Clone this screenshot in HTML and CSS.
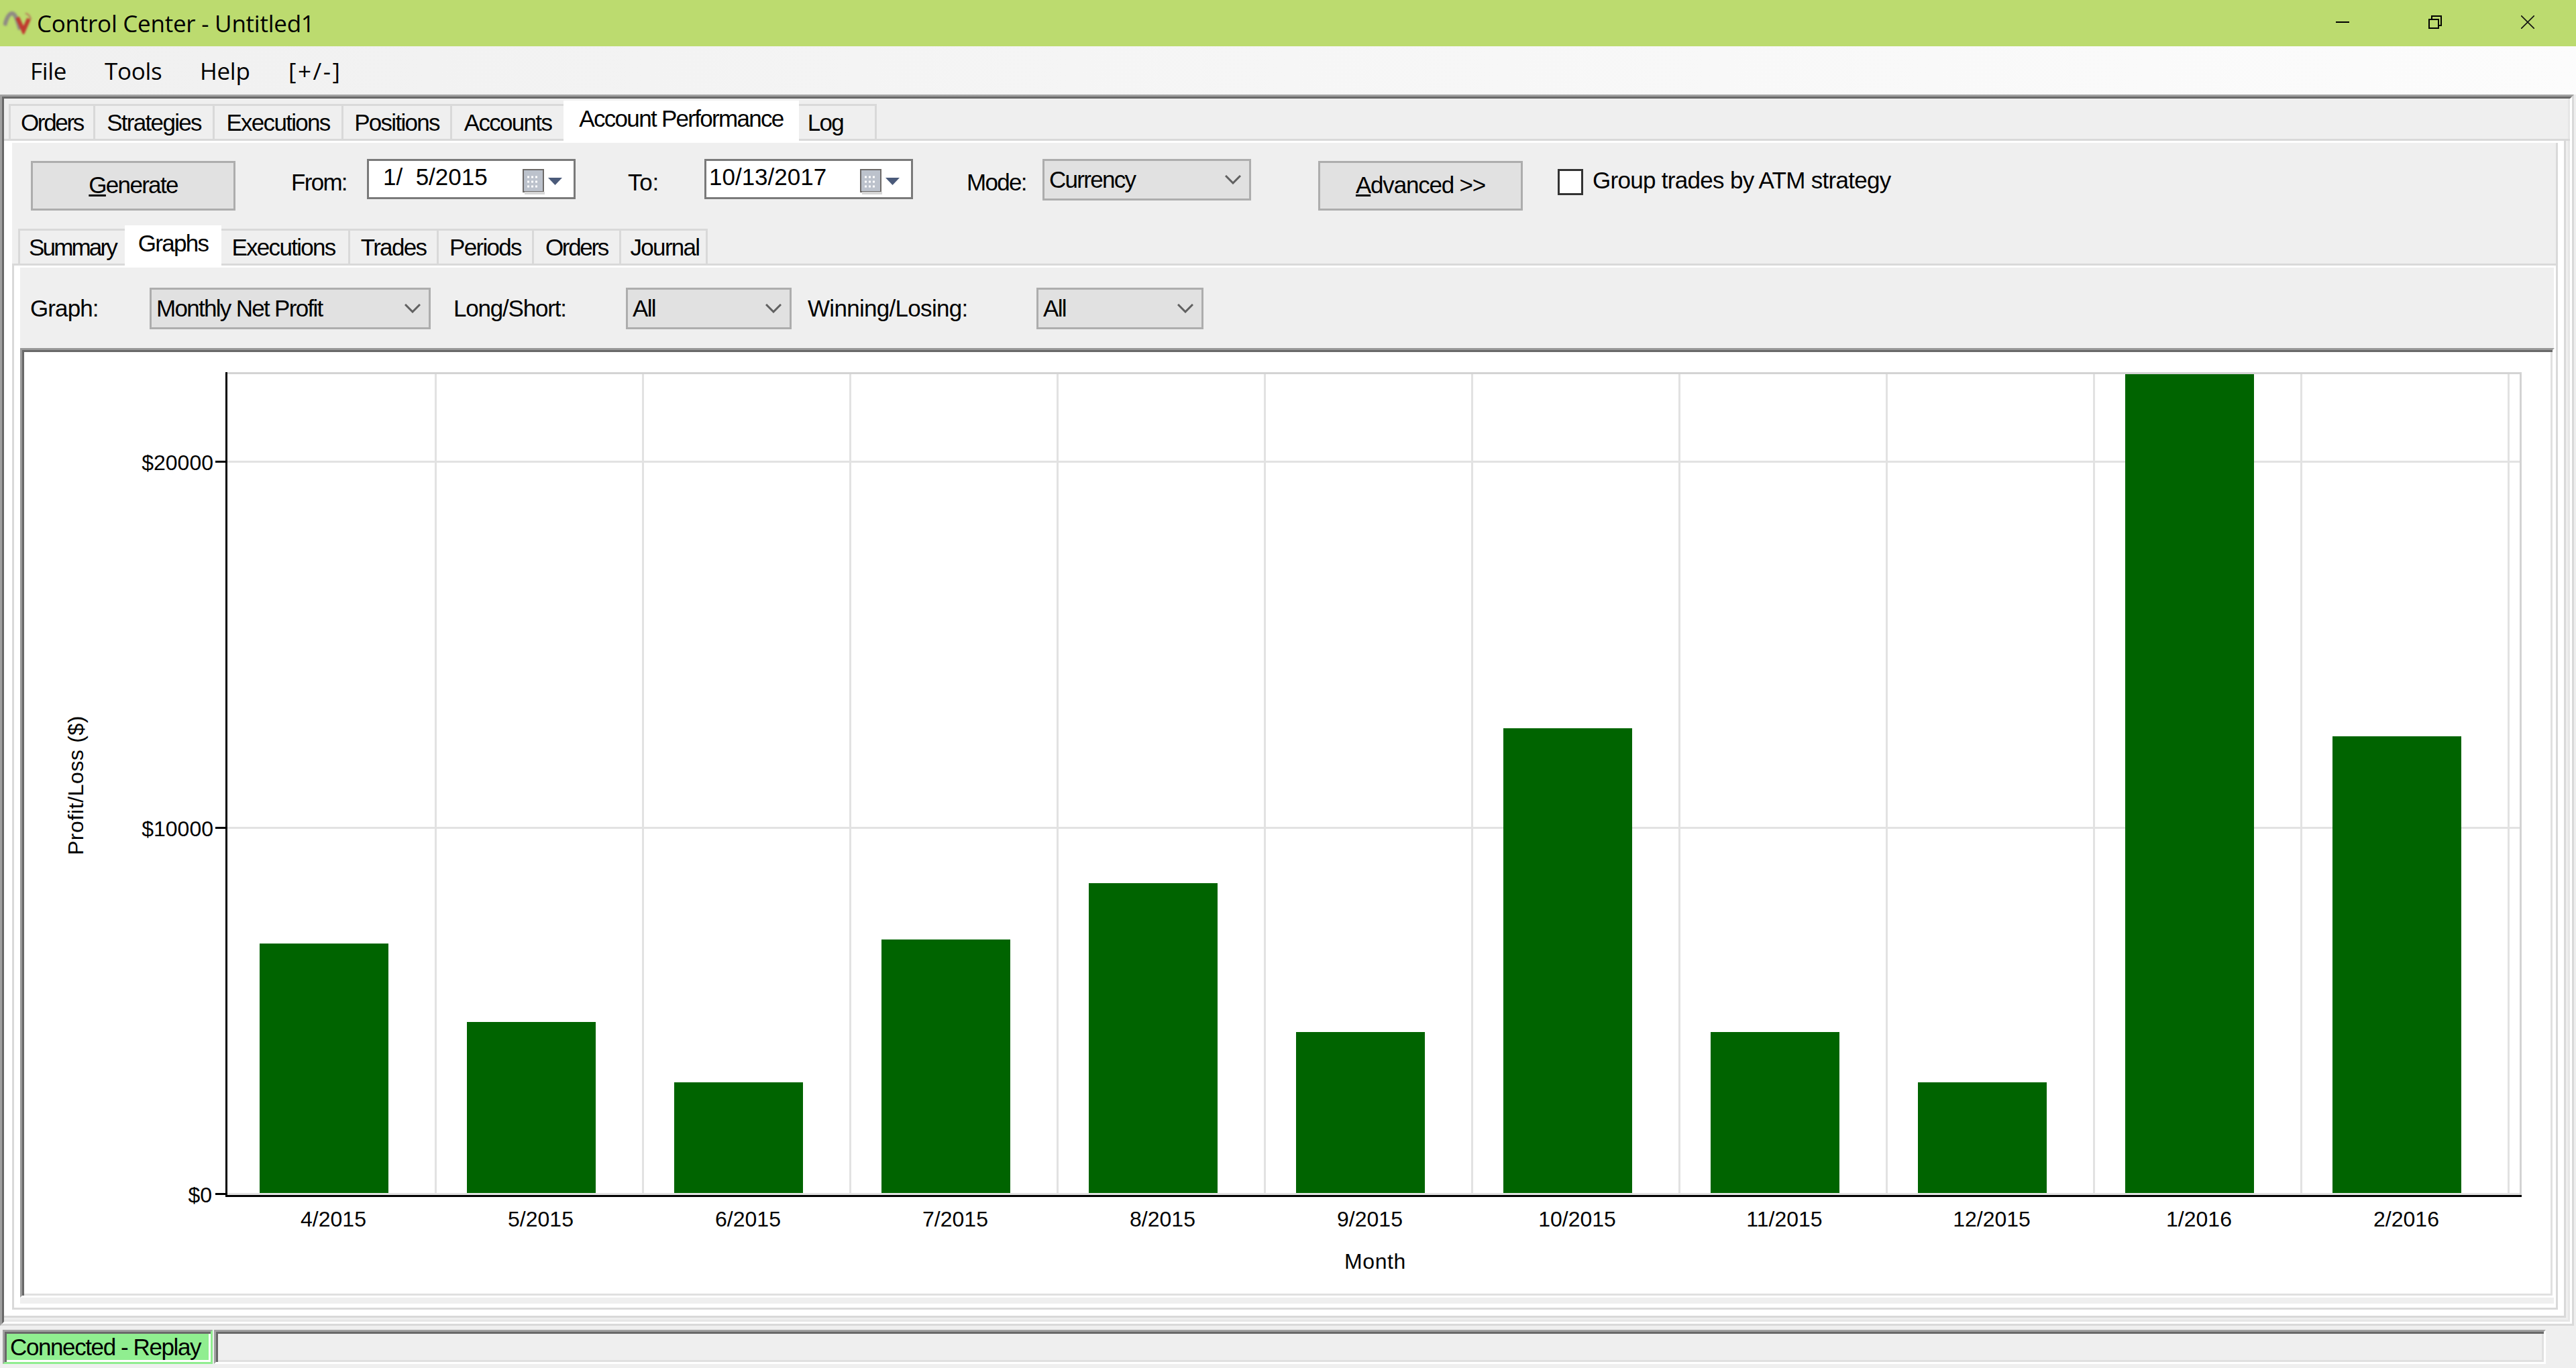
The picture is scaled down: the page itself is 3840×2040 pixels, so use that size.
FILE: index.html
```html
<!DOCTYPE html>
<html lang="en">
<head>
    <meta charset="UTF-8">
    <title>Control Center - Untitled1</title>
    <link rel="stylesheet" href="styles.css">
</head>
<body>
    <header class="title-bar">
        <svg class="app-logo" width="44" height="34" viewBox="0 0 44 34">
            <path d="M2 21C5 9 9 3 13 3C18 3 21 14 25 27" fill="none" stroke="#8f8a84" stroke-width="6"/>
            <path d="M21 9L30 29L38 11" fill="none" stroke="#c0392f" stroke-width="6"/>
            <path d="M33 3C37 4 40 7 41 12" fill="none" stroke="#b8705a" stroke-width="2"/>
        </svg>
        <span class="app-title">Control Center - Untitled1</span>
        <div class="window-buttons">
            <div class="window-button">
                <svg width="20" height="20" viewBox="0 0 20 20"><rect y="9" width="20" height="2" fill="#000"/></svg>
            </div>
            <div class="window-button">
                <svg width="20" height="20" viewBox="0 0 20 20">
                    <path d="M1 6H15V19H1Z M5 6V1H19V15H15" fill="none" stroke="#000" stroke-width="2"/>
                </svg>
            </div>
            <div class="window-button">
                <svg width="20" height="20" viewBox="0 0 20 20">
                    <path d="M0 0L20 20M20 0L0 20" fill="none" stroke="#111" stroke-width="1.6"/>
                </svg>
            </div>
        </div>
    </header>

    <nav class="menu-bar">
        <span class="menu-item menu-file">File</span>
        <span class="menu-item menu-tools">Tools</span>
        <span class="menu-item menu-help">Help</span>
        <span class="menu-item menu-toggle">[+/-]</span>
    </nav>

    <main class="main-frame">
        <div class="main-inner">
            <div class="tab-strip main-tabs">
                <div class="tab tab-orders">Orders</div>
                <div class="tab tab-strategies">Strategies</div>
                <div class="tab tab-executions">Executions</div>
                <div class="tab tab-positions">Positions</div>
                <div class="tab tab-accounts">Accounts</div>
                <div class="tab tab-active tab-performance">Account Performance</div>
                <div class="tab tab-last tab-log">Log</div>
            </div>

            <div class="tab-page">
                <div class="page-body">
                    <div class="toolbar">
                        <button class="push-button"><u>G</u>enerate</button>
                        <label class="field-label label-from">From:</label>
                        <div class="date-picker">
                            <span class="date-from">1/ &nbsp;5/2015</span>
                            <svg class="calendar-icon" width="59" height="38" viewBox="0 0 59 38">
                                <rect x="1" y="1" width="30" height="33" fill="#bcc2cc" stroke="#6d6a68" stroke-width="2"/>
                                <rect y="34" x="3" width="30" height="4" fill="#d6d6d6"/>
                                <path d="M7 12H25M7 19H25M7 26H25" stroke="#fff" stroke-width="3" stroke-dasharray="3 3"/>
                                <path d="M38 13H59L48.500 24Z" fill="#4a5a7a"/>
                            </svg>
                        </div>
                        <label class="field-label label-to">To:</label>
                        <div class="date-picker">
                            <span class="date-to">10/13/2017</span>
                            <svg class="calendar-icon" width="59" height="38" viewBox="0 0 59 38">
                                <rect x="1" y="1" width="30" height="33" fill="#bcc2cc" stroke="#6d6a68" stroke-width="2"/>
                                <rect y="34" x="3" width="30" height="4" fill="#d6d6d6"/>
                                <path d="M7 12H25M7 19H25M7 26H25" stroke="#fff" stroke-width="3" stroke-dasharray="3 3"/>
                                <path d="M38 13H59L48.500 24Z" fill="#4a5a7a"/>
                            </svg>
                        </div>
                        <label class="field-label label-mode">Mode:</label>
                        <div class="combo combo-mode">
                            <span>Currency</span>
                            <svg width="24" height="14" viewBox="0 0 24 14"><path d="M1 1L12 12L23 1" fill="none" stroke="#606060" stroke-width="3"/></svg>
                        </div>
                        <button class="push-button button-advanced"><u>A</u>dvanced &gt;&gt;</button>
                        <span class="check-box"></span>
                        <label class="check-label">Group trades by ATM strategy</label>
                    </div>

                    <div class="tab-strip inner-tabs">
                        <div class="tab tab-summary">Summary</div>
                        <div class="tab tab-active tab-graphs">Graphs</div>
                        <div class="tab tab-executions-2">Executions</div>
                        <div class="tab tab-trades">Trades</div>
                        <div class="tab tab-periods">Periods</div>
                        <div class="tab tab-orders-2">Orders</div>
                        <div class="tab tab-last tab-journal">Journal</div>
                    </div>

                    <div class="inner-page">
                        <div class="graph-panel">
                            <div class="selector-row">
                                <label class="field-label label-graph">Graph:</label>
                                <div class="combo combo-graph">
                                    <span>Monthly Net Profit</span>
                                    <svg width="24" height="14" viewBox="0 0 24 14"><path d="M1 1L12 12L23 1" fill="none" stroke="#606060" stroke-width="3"/></svg>
                                </div>
                                <label class="field-label label-long">Long/Short:</label>
                                <div class="combo combo-long">
                                    <span>All</span>
                                    <svg width="24" height="14" viewBox="0 0 24 14"><path d="M1 1L12 12L23 1" fill="none" stroke="#606060" stroke-width="3"/></svg>
                                </div>
                                <label class="field-label label-winning">Winning/Losing:</label>
                                <div class="combo combo-winning">
                                    <span>All</span>
                                    <svg width="24" height="14" viewBox="0 0 24 14"><path d="M1 1L12 12L23 1" fill="none" stroke="#606060" stroke-width="3"/></svg>
                                </div>
                            </div>

                            <div class="chart-frame">
                                <!-- viewBox uses window coordinates, so the numbers read like the plot -->
                                <svg class="chart" width="3766" height="1404" viewBox="36 525 3766 1404">
                                    <g class="grid-lines">
                                        <rect x="339" y="687" width="3417" height="3"/>
                                        <rect x="339" y="1233" width="3417" height="3"/>
                                        <rect x="339" y="1779" width="3417" height="3"/>
                                        <rect x="648" y="558" width="3" height="1224"/>
                                        <rect x="957" y="558" width="3" height="1224"/>
                                        <rect x="1266" y="558" width="3" height="1224"/>
                                        <rect x="1575" y="558" width="3" height="1224"/>
                                        <rect x="1884" y="558" width="3" height="1224"/>
                                        <rect x="2193" y="558" width="3" height="1224"/>
                                        <rect x="2502" y="558" width="3" height="1224"/>
                                        <rect x="2811" y="558" width="3" height="1224"/>
                                        <rect x="3120" y="558" width="3" height="1224"/>
                                        <rect x="3429" y="558" width="3" height="1224"/>
                                        <rect x="3738" y="558" width="3" height="1224"/>
                                    </g>
                                    <g class="plot-edge">
                                        <rect x="339" y="555" width="3420" height="3"/>
                                        <rect x="3756" y="555" width="3" height="1227"/>
                                    </g>
                                    <g class="bars">
                                        <rect x="387" y="1407" width="192" height="372"/>
                                        <rect x="696" y="1524" width="192" height="255"/>
                                        <rect x="1005" y="1614" width="192" height="165"/>
                                        <rect x="1314" y="1401" width="192" height="378"/>
                                        <rect x="1623" y="1317" width="192" height="462"/>
                                        <rect x="1932" y="1539" width="192" height="240"/>
                                        <rect x="2241" y="1086" width="192" height="693"/>
                                        <rect x="2550" y="1539" width="192" height="240"/>
                                        <rect x="2859" y="1614" width="192" height="165"/>
                                        <rect x="3168" y="558" width="192" height="1221"/>
                                        <rect x="3477" y="1098" width="192" height="681"/>
                                    </g>
                                    <g class="axes">
                                        <rect x="336" y="555" width="3" height="1230"/>
                                        <rect x="336" y="1782" width="3423" height="3"/>
                                        <rect x="321" y="687" width="15" height="3"/>
                                        <rect x="321" y="1233" width="15" height="3"/>
                                        <rect x="321" y="1779" width="15" height="3"/>
                                    </g>
                                    <g class="y-labels">
                                        <text x="318" y="701">$20000</text>
                                        <text x="318" y="1247">$10000</text>
                                        <text x="316" y="1793">$0</text>
                                    </g>
                                    <g class="x-labels">
                                        <text x="497" y="1829">4/2015</text>
                                        <text x="806" y="1829">5/2015</text>
                                        <text x="1115" y="1829">6/2015</text>
                                        <text x="1424" y="1829">7/2015</text>
                                        <text x="1733" y="1829">8/2015</text>
                                        <text x="2042" y="1829">9/2015</text>
                                        <text x="2351" y="1829">10/2015</text>
                                        <text x="2660" y="1829">11/2015</text>
                                        <text x="2969" y="1829">12/2015</text>
                                        <text x="3278" y="1829">1/2016</text>
                                        <text x="3587" y="1829">2/2016</text>
                                        <text class="axis-title" x="2050" y="1892">Month</text>
                                    </g>
                                    <text class="y-title axis-title" transform="translate(124 1171) rotate(-90)">Profit/Loss ($)</text>
                                </svg>
                            </div>
                        </div>
                    </div>
                </div>
            </div>
        </div>
    </main>

    <footer class="status-bar">
        <div class="status-connection"><span>Connected - Replay</span></div>
        <div class="status-message"></div>
    </footer>
</body>
</html>
```

FILE: styles.css
```css
* {
    margin: 0;
    padding: 0;
    box-sizing: border-box;
}

body {
    width: 3840px;
    height: 2040px;
    overflow: hidden;
    display: flex;
    flex-direction: column;
    background-color: #efefef;
    color: #000;
    font-family: "Liberation Sans", Arial, sans-serif;
    font-size: 35px;
    letter-spacing: -1.7px;
}

/* title bar */
.title-bar {
    height: 69px;
    flex: none;
    display: flex;
    align-items: center;
    background-color: #bcdb6f;
}

.app-logo {
    margin-left: 5px;
    margin-top: -1px;
    filter: blur(1.5px);
    flex: none;
}

.app-title {
    margin-left: 6px;
    font-family: "Open Sans", sans-serif;
    font-size: 35px;
    letter-spacing: -0.25px;
}

.window-buttons {
    display: flex;
    margin-left: auto;
    margin-right: 3px;
}

.window-button {
    width: 138px;
    height: 69px;
    padding-top: 23px;
    display: flex;
    justify-content: center;
    align-items: flex-start;
}

/* menu */
.menu-bar {
    height: 72px;
    flex: none;
    display: flex;
    align-items: center;
    padding-left: 45px;
    background: linear-gradient(to right, #f0f0f0, #fcfcfc);
    font-family: "Open Sans", sans-serif;
    font-size: 35px;
    letter-spacing: -0.3px;
}

.menu-file { width: 111px; }
.menu-tools { width: 142px; }
.menu-help { width: 132px; }
.menu-toggle { letter-spacing: 2.5px; }

/* outer frame of the window body */
.main-frame {
    height: 1836px;
    flex: none;
    margin-right: 3px;
    border-style: solid;
    border-width: 3px;
    border-color: #a0a0a0 #d9d9d9 #d9d9d9 #a0a0a0;
}

.main-inner {
    height: 100%;
    display: flex;
    flex-direction: column;
    border-style: solid;
    border-width: 3px;
    border-color: #696969 #fff #fff #696969;
    box-shadow: inset -3px -3px 0 #e6e6e6;
}

/* tabs */
.tab-strip {
    display: flex;
    align-items: flex-end;
    height: 63px;
    flex: none;
    border-bottom: 3px solid #d9d9d9;
}

.main-tabs { padding-left: 7px; }
.inner-tabs { padding-left: 9px; }

.tab {
    height: 52px;
    flex: none;
    display: flex;
    align-items: center;
    justify-content: center;
    border-top: 3px solid #d9d9d9;
    border-left: 3px solid #d9d9d9;
}

.tab-last { border-right: 3px solid #d9d9d9; }

.tab-active {
    height: 60px;
    margin-bottom: -3px;
    padding-bottom: 6px;
    border: none;
    background-color: #fff;
}

.tab-active + .tab { border-left: none; }

.tab-orders { width: 126px; letter-spacing: -2.3px; }
.tab-strategies { width: 178px; }
.tab-executions { width: 192px; }
.tab-positions { width: 162px; }
.tab-accounts { width: 169px; }
.tab-performance { width: 351px; }
.tab-log { width: 116px; padding-right: 34px; }

.tab-summary { width: 159px; letter-spacing: -2.8px; }
.tab-graphs { width: 144px; }
.tab-executions-2 { width: 189px; padding-right: 4px; }
.tab-trades { width: 132px; }
.tab-periods { width: 142px; }
.tab-orders-2 { width: 130px; letter-spacing: -2.3px; }
.tab-journal { width: 132px; padding-left: 4px; }

.tab-page {
    height: 1755px;
    margin-right: 6px;
    padding: 3px 9px 9px 12px;
    background-color: #fff;
    border-right: 3px solid #d9d9d9;
    border-bottom: 3px solid #d9d9d9;
}

.page-body {
    height: 100%;
    display: flex;
    flex-direction: column;
    background-color: #efefef;
    border-right: 3px solid #d9d9d9;
    border-bottom: 3px solid #d9d9d9;
}

/* report toolbar */
.toolbar {
    height: 120px;
    flex: none;
    display: flex;
    align-items: flex-start;
    padding: 24px 0 0 28px;
}

.push-button {
    width: 305px;
    height: 74px;
    margin-top: 3px;
    flex: none;
    padding-bottom: 3px;
    background-color: #e1e1e1;
    border: 3px solid #adadad;
    font: inherit;
    letter-spacing: inherit;
    color: #000;
}

.button-advanced { margin-left: 100px; letter-spacing: -1.2px; }

.field-label {
    height: 70px;
    flex: none;
    display: flex;
    align-items: center;
}

.label-from { width: 113px; margin-left: 83px; }
.label-to { width: 114px; margin-left: 78px; letter-spacing: -0.2px; }
.label-mode { width: 113px; margin-left: 80px; }

.date-picker {
    width: 311px;
    height: 60px;
    flex: none;
    display: flex;
    align-items: center;
    padding: 0 17px 6px 0;
    background-color: #fff;
    border: 3px solid #7a7a7a;
    letter-spacing: 0;
}

.date-from { padding-left: 21px; }
.date-to { padding-left: 4px; }

.calendar-icon {
    margin-left: auto;
    margin-top: 14px;
}

.combo {
    height: 62px;
    flex: none;
    display: flex;
    align-items: center;
    justify-content: space-between;
    padding: 0 12px 0 7px;
    background-color: #e1e1e1;
    border: 3px solid #adadad;
}

.combo-mode { width: 311px; }
.combo-graph { width: 419px; }
.combo-long { width: 247px; }
.combo-winning { width: 249px; }

.check-box {
    width: 38px;
    height: 39px;
    margin: 15px 0 0 52px;
    flex: none;
    background-color: #fff;
    border: 3px solid #333;
}

.check-label {
    margin: 13px 0 0 14px;
    line-height: 38px;
    letter-spacing: -0.7px;
}

/* graphs tab */
.inner-page {
    flex: 1;
    padding: 3px 3px 6px 9px;
    background-color: #fff;
    border-left: 3px solid #d9d9d9;
}

.graph-panel {
    height: 100%;
    display: flex;
    flex-direction: column;
    background-color: #efefef;
}

.selector-row {
    height: 120px;
    flex: none;
    display: flex;
    align-items: flex-start;
    padding: 30px 0 0 15px;
}

.selector-row .field-label { height: 62px; }

.label-graph { width: 178px; letter-spacing: -0.9px; }
.label-long { width: 257px; margin-left: 34px; letter-spacing: -1.2px; }
.label-winning { width: 341px; margin-left: 24px; letter-spacing: -0.7px; }

.chart-frame {
    width: 3778px;
    height: 1416px;
    flex: none;
    padding: 3px;
    background-color: #fff;
    border-style: solid;
    border-width: 3px;
    border-color: #999 #fff #fff #999;
    box-shadow: inset 3px 3px 0 #696969, inset -3px -3px 0 #e0e0e0;
}

.chart {
    display: block;
    font-size: 32px;
    letter-spacing: 0;
}

.grid-lines { fill: #e2e2e2; }
.plot-edge { fill: #d3d3d3; }
.bars { fill: #006400; }
.axes { fill: #000; }
.y-labels { text-anchor: end; }
.x-labels { text-anchor: middle; }
.y-title { text-anchor: middle; }
.axis-title { letter-spacing: 0.6px; }

/* status bar */
.status-bar {
    flex: 1;
    display: flex;
    gap: 2px;
    padding: 6px 45px 6px 4px;
    min-height: 0;
}

.status-connection {
    width: 313px;
    background-color: #90ee90;
    border-style: solid;
    border-width: 3px;
    border-color: #a0a0a0 #90ee90 #90ee90 #a0a0a0;
    box-shadow: inset 3px 3px 0 #696969, inset -3px -3px 0 #fff;
    padding: 0 0 0 8px;
    line-height: 46px;
    letter-spacing: -1.4px;
    white-space: nowrap;
}

.status-message {
    flex: 1;
    border-style: solid;
    border-width: 3px;
    border-color: #a0a0a0 #fff #fff #a0a0a0;
    box-shadow: inset 3px 3px 0 #696969, inset -3px -3px 0 #e0e0e0;
}
```
